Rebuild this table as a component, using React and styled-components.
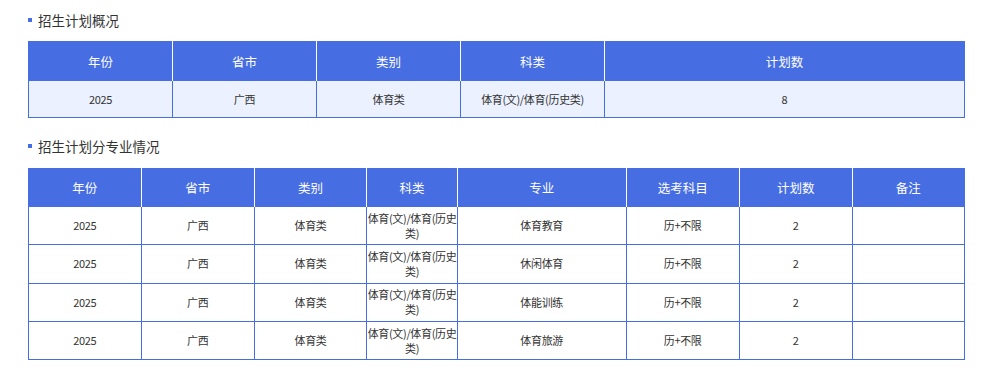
import React from "react";
import styled, { createGlobalStyle } from "styled-components";

const BLUE = "#466de1";

const Global = createGlobalStyle`
  html, body { margin: 0; padding: 0; background: #fff; }
  body { font-family: "Noto Sans CJK SC", "Noto Sans", sans-serif; color: #333; }
`;

const Page = styled.div`
  padding: 10px 18px 20px 28px;
  display: flex;
  flex-direction: column;
  gap: 18px;
`;

const Section = styled.section`
  display: flex;
  flex-direction: column;
  gap: ${(p) => p.$gap}px;
`;

const Title = styled.h3`
  margin: 0;
  display: flex;
  align-items: center;
  gap: 6px;
  height: 20px;
  font-size: 13.5px;
  font-weight: normal;
  color: #333;
  &::before {
    content: "";
    width: 4px;
    height: 4px;
    background: ${BLUE};
  }
`;

const Table = styled.table`
  width: 937px;
  table-layout: fixed;
  border-collapse: collapse;
  border: 1px solid ${BLUE};
  font-size: 11px;
`;

const HeadCell = styled.th`
  background: ${BLUE};
  color: #fff;
  font-weight: normal;
  font-size: 12.5px;
  height: ${(p) => p.$h}px;
  padding: 0;
  text-align: center;
  border-right: 1px solid #fff;
  &:last-child { border-right: none; }
`;

const Cell = styled.td`
  border: 1px solid ${BLUE};
  background: ${(p) => (p.$tint ? "#ebf1fe" : "#fff")};
  height: ${(p) => p.$h}px;
  padding: 0;
  text-align: center;
  line-height: 15px;
  letter-spacing: -0.35px;
  color: #333;
`;

const overviewCols = [144, 144, 144, 144, null];
const overviewHead = ["年份", "省市", "类别", "科类", "计划数"];
const overviewRows = [["2025", "广西", "体育类", "体育(文)/体育(历史类)", "8"]];

const majorCols = [112.7, 113, 112.7, 90.3, 169, 113, 113, null];
const majorHead = ["年份", "省市", "类别", "科类", "专业", "选考科目", "计划数", "备注"];
const majors = ["体育教育", "休闲体育", "体能训练", "体育旅游"];
const majorRows = majors.map((m) => [
  "2025",
  "广西",
  "体育类",
  "体育(文)/体育(历史类)",
  m,
  "历+不限",
  "2",
  "",
]);

function DataTable({ cols, head, rows, headH, rowH, tint }) {
  return (
    <Table>
      <colgroup>
        {cols.map((w, i) => (
          <col key={i} style={w ? { width: `${w}px` } : undefined} />
        ))}
      </colgroup>
      <thead>
        <tr>
          {head.map((h) => (
            <HeadCell key={h} $h={headH}>
              {h}
            </HeadCell>
          ))}
        </tr>
      </thead>
      <tbody>
        {rows.map((r, i) => (
          <tr key={i}>
            {r.map((c, j) => (
              <Cell key={j} $h={rowH} $tint={tint}>
                {c}
              </Cell>
            ))}
          </tr>
        ))}
      </tbody>
    </Table>
  );
}

export default function App() {
  return (
    <>
      <Global />
      <Page>
        <Section $gap={11}>
          <Title>招生计划概况</Title>
          <DataTable
            cols={overviewCols}
            head={overviewHead}
            rows={overviewRows}
            headH={38}
            rowH={36}
            tint
          />
        </Section>
        <Section $gap={12}>
          <Title>招生计划分专业情况</Title>
          <DataTable
            cols={majorCols}
            head={majorHead}
            rows={majorRows}
            headH={37}
            rowH={37.3}
          />
        </Section>
      </Page>
    </>
  );
}
